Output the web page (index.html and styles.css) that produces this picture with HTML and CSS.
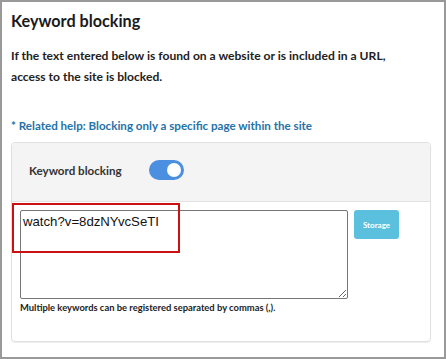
FILE: index.html
```html
<!DOCTYPE html>
<html lang="en">
<head>
  <meta charset="UTF-8">
  <title>Keyword blocking</title>
  <link rel="stylesheet" href="styles.css">
</head>
<body>
  <div class="frame">
    <h1>Keyword blocking</h1>
    <p class="intro">If the text entered below is found on a website or is included in a URL,<br>access to the site is blocked.</p>

    <a class="help" href="#">* Related help: Blocking only a specific page within the site</a>

    <div class="card">
      <div class="card-head">
        <span class="label">Keyword blocking</span>
        <span class="toggle on"><span class="knob"></span></span>
      </div>
      <div class="card-body">
        <div class="row">
          <textarea class="keywords">watch?v=8dzNYvcSeTI</textarea>
          <button class="storage">Storage</button>
        </div>
        <p class="hint">Multiple keywords can be registered separated by commas (,).</p>
      </div>
    </div>

    <div class="highlight"></div>
  </div>
</body>
</html>
```

FILE: styles.css
```css
body {
  margin: 0;
  font-family: Lato, "Liberation Sans", sans-serif;
  color: #222;
}
.frame {
  position: relative;
  width: 446px;
  height: 359px;
  box-sizing: border-box;
  border: 2px solid #999;
  padding: 0 13px 0 9px;
  background: #fff;
}
h1 {
  margin: 0;
  padding-top: 6px;
  font-size: 16.2px;
  line-height: 26px;
  font-weight: 700;
  color: #1a1a1a;
}
.intro {
  margin: 11px 0 0;
  font-size: 12.1px;
  line-height: 21px;
  font-weight: 700;
  color: #222;
}
.help {
  display: block;
  margin-top: 31px;
  font-size: 11.6px;
  line-height: 16px;
  font-weight: 700;
  color: #2672a8;
  text-decoration: none;
}
.card {
  margin-top: 8px;
  border: 1px solid #e0e0e0;
  border-radius: 4px;
  box-shadow: 0 1px 1px rgba(0, 0, 0, 0.07);
  overflow: hidden;
}
.card-head {
  display: flex;
  align-items: center;
  gap: 27px;
  height: 59px;
  box-sizing: border-box;
  padding: 0 0 4px 17px;
  background: #f4f4f4;
  border-bottom: 1px solid #e2e2e2;
}
.label {
  font-size: 11.6px;
  font-weight: 700;
  color: #333;
}
.toggle {
  position: relative;
  width: 35px;
  height: 20px;
  border-radius: 10px;
  background: #4a8fe0;
}
.knob {
  position: absolute;
  top: 3px;
  right: 3px;
  width: 14px;
  height: 14px;
  border-radius: 50%;
  background: #fff;
}
.card-body {
  padding: 8px 8px 0;
  height: 139px;
  box-sizing: border-box;
}
.row {
  display: flex;
  align-items: flex-start;
  gap: 6px;
}
.keywords {
  width: 328px;
  height: 89px;
  box-sizing: border-box;
  margin: 0;
  padding: 2px;
  border: 1px solid #767676;
  border-radius: 2px;
  font-family: "Liberation Sans", Arial, sans-serif;
  font-size: 13.2px;
  line-height: 17px;
  color: #111;
  resize: vertical;
}
.storage {
  width: 45px;
  height: 29px;
  border: none;
  border-radius: 3px;
  background: #5bc0de;
  color: #fff;
  font-family: inherit;
  font-size: 8px;
  font-weight: 700;
  padding: 0;
}
.hint {
  margin: 2px 0 0;
  font-size: 9.4px;
  line-height: 14px;
  font-weight: 700;
  color: #222;
}
.highlight {
  position: absolute;
  left: 10px;
  top: 201px;
  width: 168px;
  height: 50px;
  box-sizing: border-box;
  border: 2px solid #cc1111;
}
```
